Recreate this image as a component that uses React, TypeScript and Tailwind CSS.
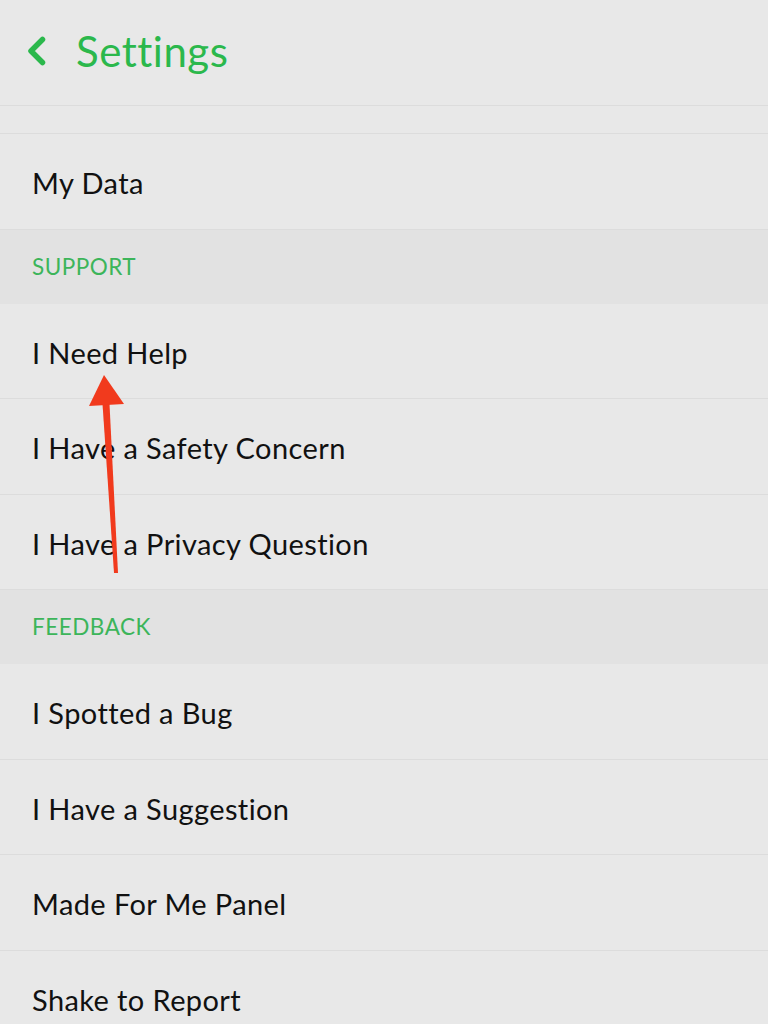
type Item = { kind: "row"; label: string } | { kind: "header"; label: string };

const items: Item[] = [
  { kind: "row", label: "My Data" },
  { kind: "header", label: "SUPPORT" },
  { kind: "row", label: "I Need Help" },
  { kind: "row", label: "I Have a Safety Concern" },
  { kind: "row", label: "I Have a Privacy Question" },
  { kind: "header", label: "FEEDBACK" },
  { kind: "row", label: "I Spotted a Bug" },
  { kind: "row", label: "I Have a Suggestion" },
  { kind: "row", label: "Made For Me Panel" },
  { kind: "row", label: "Shake to Report" },
];

const SettingsRow = ({ label }: { label: string }) => (
  <div className="h-[95.5px] flex items-center px-8 border-b border-[#dcdcdc] text-[29px] text-[#111111] tracking-[0.4px]">
    <span className="mt-[3px]">{label}</span>
  </div>
);

const SectionHeader = ({ label }: { label: string }) => (
  <div className="h-[74px] flex items-center px-8 bg-[#e2e2e2] text-[22.5px] text-[#3cb55a] tracking-[0.5px]">
    {label}
  </div>
);

const App = () => {
  return (
    <div
      className="relative w-[768px] h-[1024px] overflow-hidden bg-[#e8e8e8]"
      style={{ fontFamily: "Lato, 'Noto Sans', sans-serif" }}
    >
      <div className="h-[106px] flex items-center pl-[27px] border-b border-[#dcdcdc]">
        <svg width="20" height="30" viewBox="0 0 20 30" className="-mt-[4px]">
          <polyline
            points="15.5,3.5 4,15 15.5,26.5"
            fill="none"
            stroke="#2bb84c"
            strokeWidth="5.5"
            strokeLinecap="round"
            strokeLinejoin="round"
          />
        </svg>
        <span className="ml-[29px] -mt-[2px] text-[42px] text-[#2bb84c] tracking-[0.5px]">Settings</span>
      </div>
      <div className="h-[28px] border-b border-[#dcdcdc]" />
      {items.map((item) =>
        item.kind === "row" ? (
          <SettingsRow key={item.label} label={item.label} />
        ) : (
          <SectionHeader key={item.label} label={item.label} />
        )
      )}

      {/* annotation arrow */}
      <svg className="absolute left-0 top-0 pointer-events-none" width="768" height="1024">
        <polygon points="102.5,404 109.5,404 118,573 114,573" fill="#f13a1d" />
        <polygon points="104,375 89,406 124,404" fill="#f13a1d" />
      </svg>
    </div>
  );
};

export default App;
